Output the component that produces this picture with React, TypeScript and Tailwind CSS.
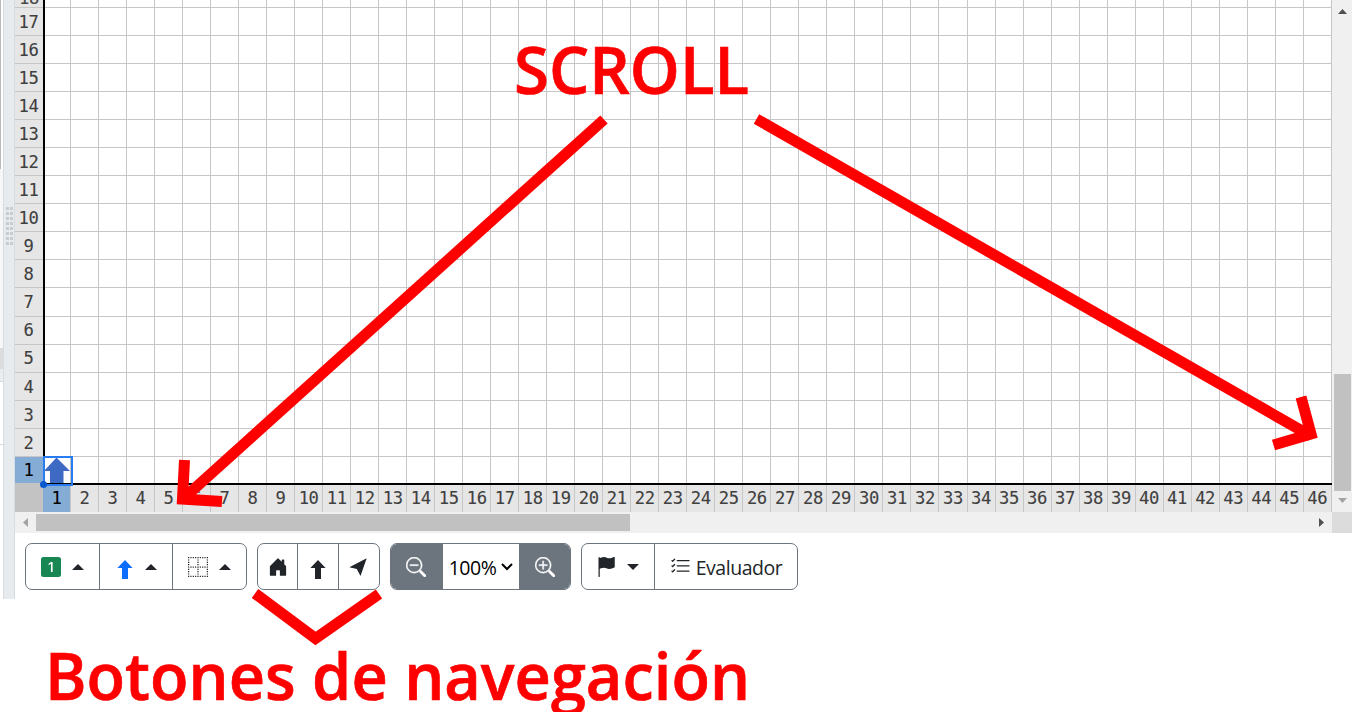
import React from "react";
import { BsHouseDoorFill, BsZoomOut, BsZoomIn, BsListCheck, BsBorder, BsFlagFill, BsFill1SquareFill } from "react-icons/bs";

const rows = Array.from({ length: 17 }, (_, i) => 17 - i);
const cols = Array.from({ length: 46 }, (_, i) => i + 1);

function Caret({ down = false }: { down?: boolean }) {
  return (
    <svg width="12" height="6" viewBox="0 0 12 6" className="shrink-0" fill="#212529">
      {down ? <path d="M0 0H12L6 6Z" /> : <path d="M0 6H12L6 0Z" />}
    </svg>
  );
}

function UpArrow({ className = "" }: { className?: string }) {
  return (
    <svg viewBox="0 0 16 19" className={"h-[19px] w-4 shrink-0 " + className} fill="currentColor">
      <path d="M8 0L15.6 8H11V19H5V8H.4Z" />
    </svg>
  );
}

function Sidebar() {
  return (
    <div className="flex h-[599px] w-[15px] shrink-0">
      <div className="flex w-[3px] flex-col">
        <div className="h-[169px] w-[1px] bg-[#b9b9b9]" />
        <div className="h-[179px] bg-[#f7f7f7]" />
        <div className="h-[21px] bg-[#dcdcdc]" />
        <div className="h-[13px] border-b border-[#d5dbe0] bg-[#e9edf0]" />
        <div className="h-[63px] border-b border-[#d5dbe0]" />
      </div>
      <div className="flex w-3 items-start justify-center border-x border-[#d5dde3] bg-[#e7ebee] pt-[207px]">
        <div className="grid grid-cols-2 gap-x-[1px] gap-y-[2px]">
          {Array.from({ length: 16 }, (_, i) => (
            <span key={i} className="h-[3px] w-[3px] bg-[#c9cccf]" />
          ))}
        </div>
      </div>
    </div>
  );
}

function Board() {
  return (
    <div className="flex h-[512px] w-[1317px] flex-col overflow-hidden text-[17.2px] leading-none tracking-[-0.35px] [-webkit-text-stroke:0.1px_currentColor]">
      <div className="flex h-[8px] shrink-0 overflow-hidden">
        <div className="flex w-[28px] items-end justify-center overflow-hidden border-b border-[#c6c6c6] bg-[#e6e6e6] text-[#484848]">
          <span>18</span>
        </div>
        <div className="w-[2px] bg-black" />
        {cols.map((c) => (
          <div key={c} className={(c === 1 ? "w-[26px]" : "w-[28.022px]") + " shrink-0 border-r border-b border-[#c6c6c6]"} />
        ))}
      </div>
      {rows.map((r) => (
        <div key={r} className={(r === 1 ? "h-[26px]" : "h-[28.06px]") + " flex shrink-0"}>
          <div
            className={
              (r === 1 ? "bg-[#84acd4] pt-[2px] text-black " : "border-b border-[#c6c6c6] bg-[#e6e6e6] pt-[2px] text-[#404040] ") +
              "flex w-[28px] shrink-0 items-center justify-center pr-[1px]"
            }
          >
            {r}
          </div>
          <div className="w-[2px] shrink-0 bg-black" />
          {cols.map((c) => (
            <div
              key={c}
              className={
                (c === 1 ? "w-[26px] " : "w-[28.022px] ") + (r === 1 ? "" : "border-b ") + "relative shrink-0 border-r border-[#c6c6c6]"
              }
            >
              {r === 1 && c === 1 && (
                <svg viewBox="0 0 34 34" className="absolute -left-[5px] -top-[3px] z-10 h-[34px] w-[34px]">
                  <path d="M16.500 3.5L30 17H23.500V29H10V17H4Z" fill="#3f6ac4" />
                  <rect x="4" y="3" width="28" height="28" fill="none" stroke="#287bf0" strokeWidth="2" />
                  <circle cx="3.500" cy="30.5" r="3.500" fill="#0757cf" />
                </svg>
              )}
            </div>
          ))}
        </div>
      ))}
      <div className="flex h-[29px] shrink-0">
        <div className="w-[28px] shrink-0 bg-[#c3c3c3]" />
        <div className="flex flex-col">
          <div className="h-[2px] w-full bg-black" />
          <div className="flex h-[27px]">
            {cols.map((c) => (
              <div
                key={c}
                className={
                  (c === 1 ? "w-[28px] bg-[#84acd4] text-black " : "w-[28.022px] bg-[#e6e6e6] text-[#404040] ") +
                  "flex shrink-0 items-center justify-center border-r border-[#c6c6c6] pt-[1px]"
                }
              >
                {c}
              </div>
            ))}
          </div>
        </div>
      </div>
    </div>
  );
}

function VerticalScrollbar() {
  return (
    <div className="flex h-[512px] flex-1 flex-col items-center bg-[#f0f0f0] pl-[1px] pt-[9px]">
      <svg width="9" height="5" viewBox="0 0 9 5" fill="#505050"><path d="M0 5H9L4.5 0Z" /></svg>
      <div className="mt-[360px] h-[117px] w-[17px] bg-[#c1c1c1]" />
      <svg width="9" height="5" viewBox="0 0 9 5" className="mt-[7px]" fill="#a3a3a3"><path d="M0 0H9L4.5 5Z" /></svg>
    </div>
  );
}

function HorizontalScrollbar() {
  return (
    <div className="flex h-[21px] items-center">
      <div className="flex h-full w-[1317px] items-center bg-[#f0f0f0] px-[8px]">
        <svg width="5" height="9" viewBox="0 0 5 9" fill="#a3a3a3"><path d="M5 0V9L0 4.5Z" /></svg>
        <div className="ml-[8px] h-[17px] w-[594px] bg-[#c1c1c1]" />
        <svg width="5" height="9" viewBox="0 0 5 9" className="ml-auto" fill="#505050"><path d="M0 0V9L5 4.5Z" /></svg>
      </div>
      <div className="h-full flex-1 bg-[#dcdcdc]" />
    </div>
  );
}

function Toolbar() {
  const group = "flex h-[47px] overflow-hidden rounded-[7px] border border-[#6c757d]";
  const cell = "flex items-center justify-center border-r border-[#6c757d] ";
  return (
    <div className="flex gap-[10px] pl-[10px] pt-[10px] text-[#212529]">
      <div className={group + " w-[222px]"}>
        <div className={cell + "w-[74px] gap-[11px]"}>
          <BsFill1SquareFill size={20} color="#198754" />
          <Caret />
        </div>
        <div className={cell + "w-[73px] gap-[12px] pl-[2px]"}>
          <UpArrow className="mt-[6px] text-[#0d6efd]" />
          <Caret />
        </div>
        <div className="flex flex-1 items-center justify-center gap-[11px]">
          <BsBorder size={20} />
          <Caret />
        </div>
      </div>
      <div className={group + " w-[123px]"}>
        <div className={cell + "w-[40px]"}><BsHouseDoorFill size={20} /></div>
        <div className={cell + "w-[41px]"}><UpArrow className="mt-[6px]" /></div>
        <div className="flex flex-1 items-center justify-center pr-[2px]">
          <svg width="18" height="18" viewBox="0 0 18 18" fill="currentColor"><path d="M17.7 .3L.3 9.200L7.800 11L11.500 17.900Z" /></svg>
        </div>
      </div>
      <div className={group + " w-[181px]"}>
        <div className="flex w-[52px] items-center justify-center bg-[#6c757d] pr-[2px] text-white"><BsZoomOut size={20} strokeWidth={0.3} /></div>
        <div className="flex w-[76px] items-center justify-center gap-[5px] text-[19.5px] text-black">
          <span className="pt-[2px] tracking-[-0.5px]">100%</span>
          <svg width="12" height="8" viewBox="0 0 12 8" fill="none" stroke="black" strokeWidth="2"><path d="M1 1L6 6L11 1" /></svg>
        </div>
        <div className="flex flex-1 items-center justify-center bg-[#6c757d] text-white"><BsZoomIn size={20} strokeWidth={0.3} /></div>
      </div>
      <div className={group + " w-[217px]"}>
        <div className={cell + "w-[73px] gap-[11px] pr-[1px]"}>
          <BsFlagFill size={20} />
          <Caret down />
        </div>
        <div className="flex flex-1 items-center justify-center gap-[5px]">
          <BsListCheck size={21} />
          <span className="pt-[2px] text-[19.5px] tracking-[-0.45px]">Evaluador</span>
        </div>
      </div>
    </div>
  );
}

function Annotations() {
  return (
    <svg viewBox="0 0 1352 712" className="pointer-events-none absolute inset-0 z-20 h-[712px] w-[1352px]">
      <g fill="none" stroke="#ff0000" strokeWidth="11">
        <path d="M604 119.500L184 498" />
        <path d="M184.500 460L182.500 499L222 501.500" />
        <path d="M756.500 119L1311 436" />
        <path d="M1301 397L1311 434L1273.500 445" />
        <path d="M255 593.500L315.500 638.500L379 594" />
      </g>
      <g fill="#ff0000" stroke="#ff0000" strokeWidth="0.7" fontFamily="'Open Sans', sans-serif" fontWeight="600" fontSize="65.5">
        <text x="514" y="94" textLength="235" lengthAdjust="spacingAndGlyphs">SCROLL</text>
        <text x="45" y="700" textLength="705" lengthAdjust="spacingAndGlyphs">Botones de navegación</text>
      </g>
    </svg>
  );
}

export default function App() {
  return (
    <div className="relative flex h-[712px] w-[1352px] overflow-hidden bg-white font-['Open_Sans',sans-serif]">
      <Sidebar />
      <div className="flex min-w-0 flex-1 flex-col">
        <div className="flex font-['DejaVu_Sans_Mono',monospace]">
          <Board />
          <VerticalScrollbar />
        </div>
        <HorizontalScrollbar />
        <Toolbar />
      </div>
      <Annotations />
    </div>
  );
}
